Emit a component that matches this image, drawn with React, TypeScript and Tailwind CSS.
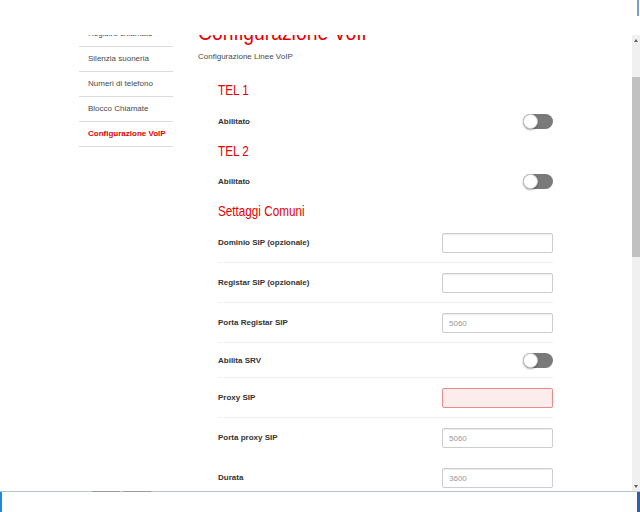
import React from "react";

function Toggle() {
  return (
    <div className="relative w-[30px] h-[15px] rounded-full bg-[#7a7a7a] shrink-0">
      <div className="absolute left-0 top-0 w-[15px] h-[15px] rounded-full bg-white border border-[#cfcfcf] shadow-[0_1px_2px_rgba(0,0,0,0.35)]" />
    </div>
  );
}

function Field({ ph, error }: { ph?: string; error?: boolean }) {
  return (
    <input
      readOnly
      placeholder={ph}
      className={
        error
          ? "w-[111px] h-[20px] rounded-[2px] border border-[#f08a8a] bg-[#fdecec] px-[6px] text-[8px] outline-none font-['Liberation_Sans',sans-serif]"
          : "w-[111px] h-[20px] rounded-[2px] border border-[#cdcdcd] bg-white px-[6px] text-[8px] text-[#555] placeholder:text-[#999] outline-none shadow-[inset_0_1px_1px_rgba(0,0,0,0.08)] font-['Liberation_Sans',sans-serif]"
      }
    />
  );
}

function Row({
  label,
  children,
  noBorder,
}: {
  label: string;
  children: React.ReactNode;
  noBorder?: boolean;
}) {
  return (
    <div
      className={
        noBorder
          ? "flex items-center justify-between pt-[10px] pb-[9px] border-b border-transparent"
          : "flex items-center justify-between pt-[10px] pb-[9px] border-b border-[#efefef]"
      }
    >
      <span className="text-[8px] leading-[10px] font-bold text-[#333]">{label}</span>
      {children}
    </div>
  );
}

function Heading({ children, cls }: { children: React.ReactNode; cls: string }) {
  return (
    <div className={"h-[18px] " + cls}>
      <div className="h-[18px] leading-[18px] text-[15px] text-[#e60000] whitespace-nowrap origin-left scale-x-[0.78]">
        {children}
      </div>
    </div>
  );
}

export default function App() {
  const side = [
    "Registro chiamate",
    "Silenzia suoneria",
    "Numeri di telefono",
    "Blocco Chiamate",
  ];
  return (
    <div className="relative w-[640px] h-[512px] flex flex-col overflow-hidden bg-white font-['Liberation_Sans',Arial,sans-serif]">
      {/* top blank header */}
      <div className="relative h-[35px] shrink-0 bg-white z-10">
        <div className="absolute right-[1px] top-0 w-[2px] h-[16px] bg-[#7d9cc9]" />
      </div>

      {/* middle */}
      <div className="flex flex-1 min-h-0">
        <div className="flex-1 overflow-hidden">
          <div className="flex mt-[-13px]">
            {/* sidebar */}
            <div className="ml-[79px] w-[94px] flex flex-col shrink-0">
              {side.map((s) => (
                <div
                  key={s}
                  className="h-[25px] border-b border-[#dcdcdc] flex items-center pl-[9px] text-[8px] text-[#4a4a4a] whitespace-nowrap"
                >
                  {s}
                </div>
              ))}
              <div className="h-[25px] border-b border-[#dcdcdc] flex items-center pl-[9px] text-[8px] font-bold text-[#e60000] whitespace-nowrap">
                Configurazione VoIP
              </div>
            </div>

            {/* main */}
            <div className="ml-[25px] flex flex-col">
              <div className="h-[22px] leading-[22px] text-[22px] text-[#e60000] whitespace-nowrap origin-left scale-x-[0.88]">
                Configurazione VoIP
              </div>
              <div className="mt-[7px] leading-[12px] text-[8px] text-[#4a4a4a] whitespace-nowrap">
                Configurazione Linee VoIP
              </div>

              <div className="ml-[20px] w-[335px] mt-[18px] flex flex-col">
                <Heading cls="mb-[5px]">TEL 1</Heading>
                <div className="flex items-center justify-between py-[10px]">
                  <span className="text-[8px] leading-[10px] font-bold text-[#333]">Abilitato</span>
                  <Toggle />
                </div>
                <Heading cls="mt-[3px] mb-[4px]">TEL 2</Heading>
                <div className="flex items-center justify-between py-[10px]">
                  <span className="text-[8px] leading-[10px] font-bold text-[#333]">Abilitato</span>
                  <Toggle />
                </div>
                <Heading cls="mt-[3px] mb-[3px]">Settaggi Comuni</Heading>

                <Row label="Dominio SIP (opzionale)">
                  <Field />
                </Row>
                <Row label="Registar SIP (opzionale)">
                  <Field />
                </Row>
                <Row label="Porta Registar SIP">
                  <Field ph="5060" />
                </Row>
                <Row label="Abilita SRV">
                  <Toggle />
                </Row>
                <Row label="Proxy SIP">
                  <Field error />
                </Row>
                <Row label="Porta proxy SIP" noBorder>
                  <Field ph="5060" />
                </Row>
                <Row label="Durata" noBorder>
                  <Field ph="3600" />
                </Row>
              </div>
            </div>
          </div>
        </div>

        {/* scrollbar */}
        <div className="w-[8px] shrink-0 bg-[#f0f0f0] flex flex-col items-center">
          <div className="h-[10px] w-full flex items-center justify-center">
            <div className="w-0 h-0 border-l-[2px] border-r-[2px] border-b-[3px] border-l-transparent border-r-transparent border-b-[#606060]" />
          </div>
          <div className="h-[32px]" />
          <div className="h-[180px] w-full bg-[#c1c1c1]" />
          <div className="flex-1" />
          <div className="h-[10px] w-full flex items-center justify-center">
            <div className="w-0 h-0 border-l-[2px] border-r-[2px] border-t-[3px] border-l-transparent border-r-transparent border-t-[#606060]" />
          </div>
        </div>
      </div>

      {/* bottom bar */}
      <div className="relative h-[21px] shrink-0 border-t border-[#b7c2c9] bg-white flex">
        <div className="absolute left-[92px] top-[-1px] w-[28px] h-[1px] bg-[#9a9a9a]" />
        <div className="absolute left-[123px] top-[-1px] w-[28px] h-[1px] bg-[#9a9a9a]" />
        <div className="w-[2px] h-full bg-[#1c8ad4]" />
        <div className="flex-1" />
        <div className="w-[3px] h-full bg-[#2d5fae]" />
      </div>
    </div>
  );
}
